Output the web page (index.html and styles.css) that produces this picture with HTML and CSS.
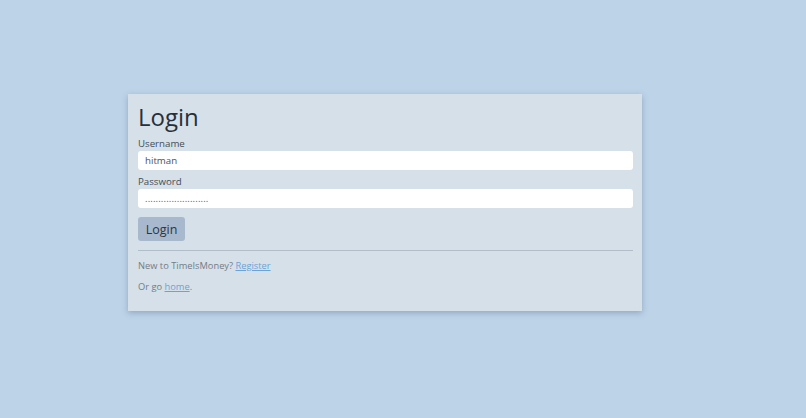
FILE: index.html
```html
<!DOCTYPE html>
<html lang="en">
<head>
<meta charset="utf-8">
<title>Login - TimeIsMoney</title>
<link rel="stylesheet" href="styles.css">
</head>
<body>
<main class="page">
  <section class="card">
    <h1 class="title">Login</h1>
    <form class="form">
      <label class="label" for="username">Username</label>
      <input class="field" id="username" type="text" value="hitman">
      <label class="label" for="password">Password</label>
      <input class="field field-secret" id="password" type="text" value="........................">
      <button class="btn" type="button">Login</button>
    </form>
    <hr class="rule">
    <p class="note">New to TimeIsMoney? <a href="#" class="link">Register</a></p>
    <p class="note">Or go <a href="#" class="link">home</a>.</p>
  </section>
</main>
</body>
</html>
```

FILE: styles.css
```css
* { box-sizing: border-box; }

html, body {
  margin: 0;
  height: 100%;
}

body {
  background: #bdd3e8;
  font-family: "Open Sans", "Noto Sans", sans-serif;
  color: #2f3640;
}

.page {
  padding: 94px 0 0 128px;
}

.card {
  width: 514px;
  background: #d6e0e8;
  padding: 8px 9px 18px 10px;
  box-shadow: 0 2px 6px rgba(60, 90, 120, 0.35);
}

.title {
  margin: 0;
  font-size: 24px;
  font-weight: 400;
  line-height: 30px;
  color: #27303a;
}

.form {
  display: flex;
  flex-direction: column;
  align-items: flex-start;
}

.label {
  margin-top: 5px;
  font-size: 9.7px;
  line-height: 13px;
  color: #454d57;
}

.field {
  width: 100%;
  height: 19px;
  margin-top: 1px;
  border: none;
  border-radius: 3px;
  background: #ffffff;
  padding: 0 7px;
  font: inherit;
  font-size: 9.7px;
  color: #4a525c;
  outline: none;
}

.field-secret {
  letter-spacing: 0.1px;
  color: #555d66;
}

.btn {
  margin-top: 9px;
  width: 47px;
  height: 24px;
  border: none;
  border-radius: 3px;
  background: #a9b9cd;
  font: inherit;
  font-size: 12.5px;
  color: #2c3540;
  padding: 0;
}

.rule {
  margin: 9px 0 0;
  border: none;
  border-top: 1px solid #b1bdc9;
}

.note {
  margin: 9px 0 0;
  font-size: 9.3px;
  line-height: 12px;
  color: #737c86;
}

.note + .note {
  margin-top: 9px;
}

.link {
  color: #6aa3d8;
  text-decoration: underline;
}
```
